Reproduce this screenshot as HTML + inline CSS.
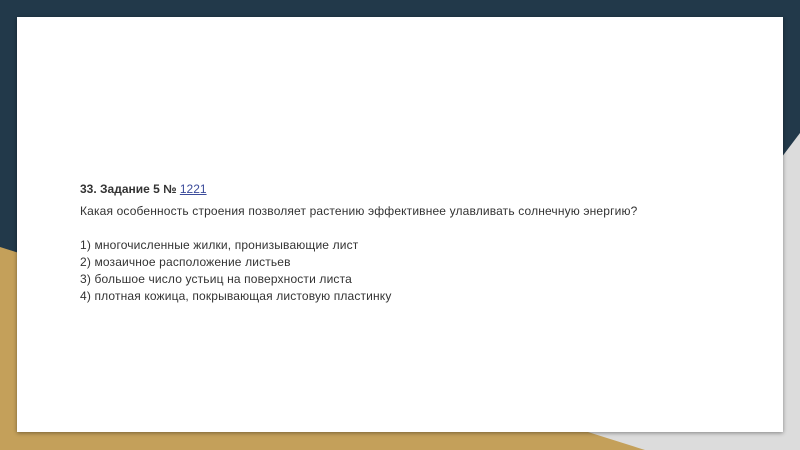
<!DOCTYPE html>
<html><head><meta charset="utf-8"><style>
html,body{margin:0;padding:0;width:800px;height:450px;overflow:hidden;background:#22394a;font-family:"Liberation Sans",Arial,sans-serif}
.card{position:absolute;left:17px;top:17px;width:766px;height:415px;background:#fff;box-shadow:0 1px 4px rgba(0,0,0,.4)}
.t{position:absolute;left:80px;font-size:12px;color:#333;white-space:nowrap;letter-spacing:0.15px}
a{color:#3a4a9a}
</style></head><body>
<svg width="800" height="450" style="position:absolute;left:0;top:0">
<polygon points="800,133 800,450 560,450" fill="#dcdcdc"/>
<polygon points="0,247 645,450 0,450" fill="#c4a05a"/>
</svg>
<div class="card"></div>
<div class="t" style="top:182px;font-weight:bold;letter-spacing:0">33. Задание 5 № <a href="#" style="font-weight:normal">1221</a></div>
<div class="t" style="top:204px">Какая особенность строения позволяет растению эффективнее улавливать солнечную энергию?</div>
<div class="t" style="top:238px">1) многочисленные жилки, пронизывающие лист</div>
<div class="t" style="top:255px">2) мозаичное расположение листьев</div>
<div class="t" style="top:272px">3) большое число устьиц на поверхности листа</div>
<div class="t" style="top:289px">4) плотная кожица, покрывающая листовую пластинку</div>
</body></html>
